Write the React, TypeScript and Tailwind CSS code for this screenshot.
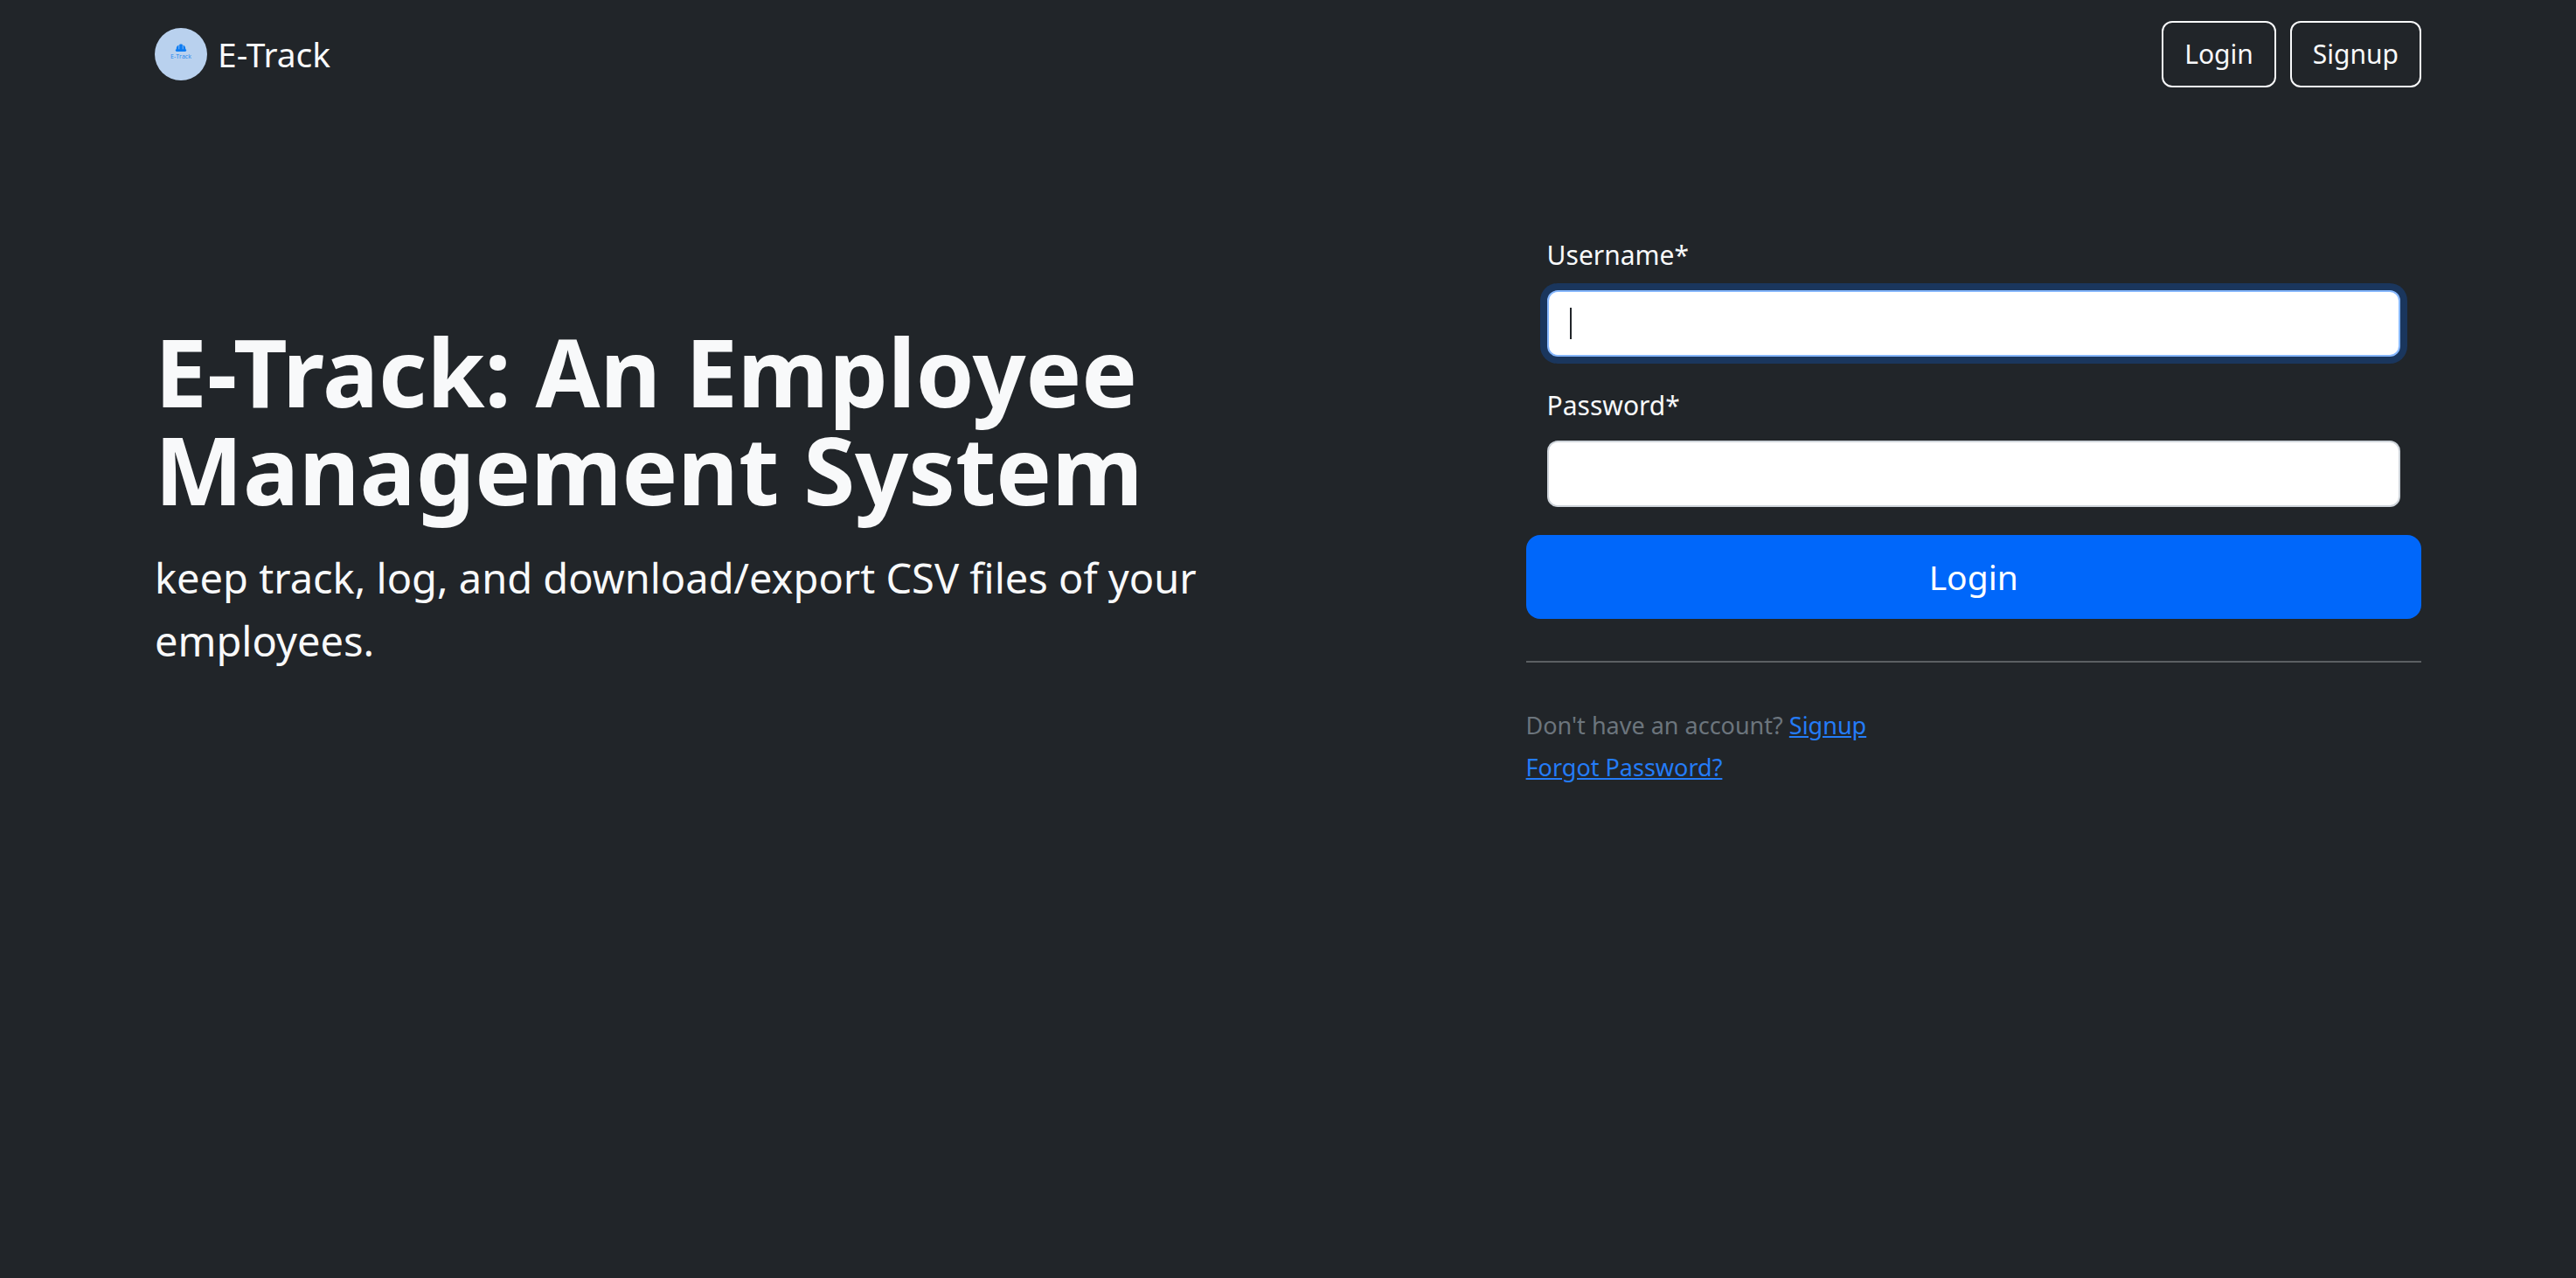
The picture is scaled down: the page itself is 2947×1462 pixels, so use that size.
import React from "react";

function BrandMark() {
  return (
    <svg viewBox="0 0 60 60" className="size-[60px] shrink-0" aria-hidden="true">
      <circle cx="30" cy="30" r="30" fill="#b9d1ee" />
      <g fill="#0d7cf2">
        <path d="M24.800 25v-1.500c0-2 1-3.400 2.700-4.100V25h.7v-6c.5-.3 1.100-.4 1.800-.4s1.300.1 1.800.4v6h.7v-5.600c1.700.7 2.700 2.100 2.700 4.100V25z" />
        <rect x="23.800" y="24.200" width="12.400" height="2.800" rx="1.400" />
      </g>
      <text
        x="30"
        y="35"
        textAnchor="middle"
        fontSize="7"
        fontWeight="500"
        fill="#2486ee"
        className="font-['Open_Sans',sans-serif]"
      >
        E-Track
      </text>
    </svg>
  );
}

const navButton =
  "h-[76px] rounded-xl border-2 border-[#f8f9fa] px-6 text-[30px] leading-[48px] text-[#f8f9fa]";

export default function App() {
  return (
    <div className="min-h-screen bg-[#212529] px-6 font-['Noto_Sans',sans-serif] text-[#f8f9fa]">
      <nav className="mx-auto flex max-w-[2593px] items-center justify-between py-6">
        <a href="#" className="flex items-center gap-3 text-[39px] leading-[60px]">
          <BrandMark />
          E-Track
        </a>
        <div className="flex gap-4">
          <button type="button" className={navButton}>Login</button>
          <button type="button" className={navButton}>Signup</button>
        </div>
      </nav>

      <main className="mx-auto grid max-w-[2593px] items-center gap-24 pt-36 lg:grid-cols-[23fr_16fr]">
        <section>
          <h1 className="mb-8 text-[107px] leading-[112px] font-bold">
            E-Track: An Employee Management System
          </h1>
          <p className="mb-8 w-10/12 text-[47px] leading-[72px]">
            keep track, log, and download/export CSV files of your employees.
          </p>
        </section>

        <form onSubmit={(e) => e.preventDefault()}>
          <div className="mb-8 px-6">
            <label htmlFor="username" className="mb-4 block text-[30px] leading-[48px]">
              Username*
            </label>
            <div className="relative">
              <input
                id="username"
                type="text"
                className="block h-[76px] w-full rounded-xl border-2 border-[#86b7fe] bg-white px-6 text-[30px] text-[#212529] caret-transparent ring-8 ring-[#1a365d] outline-none"
              />
              <span className="absolute top-5 left-[26px] h-9 w-[2px] bg-[#212529]" aria-hidden="true" />
            </div>
          </div>
          <div className="mb-8 px-6">
            <label htmlFor="password" className="mb-4 block text-[30px] leading-[48px]">
              Password*
            </label>
            <input
              id="password"
              type="password"
              className="block h-[76px] w-full rounded-xl border-2 border-[#ced4da] bg-white px-6 text-[30px] text-[#212529] outline-none"
            />
          </div>
          <button
            type="submit"
            className="block h-24 w-full rounded-2xl bg-[#0067fa] text-[39px] leading-[60px] text-white"
          >
            Login
          </button>
          <hr className="my-12 border-t-2 border-[#5b5f62]" />
          <p className="text-[27px] leading-[48px] text-[#6c757d]">
            Don't have an account?{" "}
            <a href="#" className="text-[#247cf8] underline">Signup</a>
            <br />
            <a href="#" className="text-[#247cf8] underline">Forgot Password?</a>
          </p>
        </form>
      </main>
    </div>
  );
}
